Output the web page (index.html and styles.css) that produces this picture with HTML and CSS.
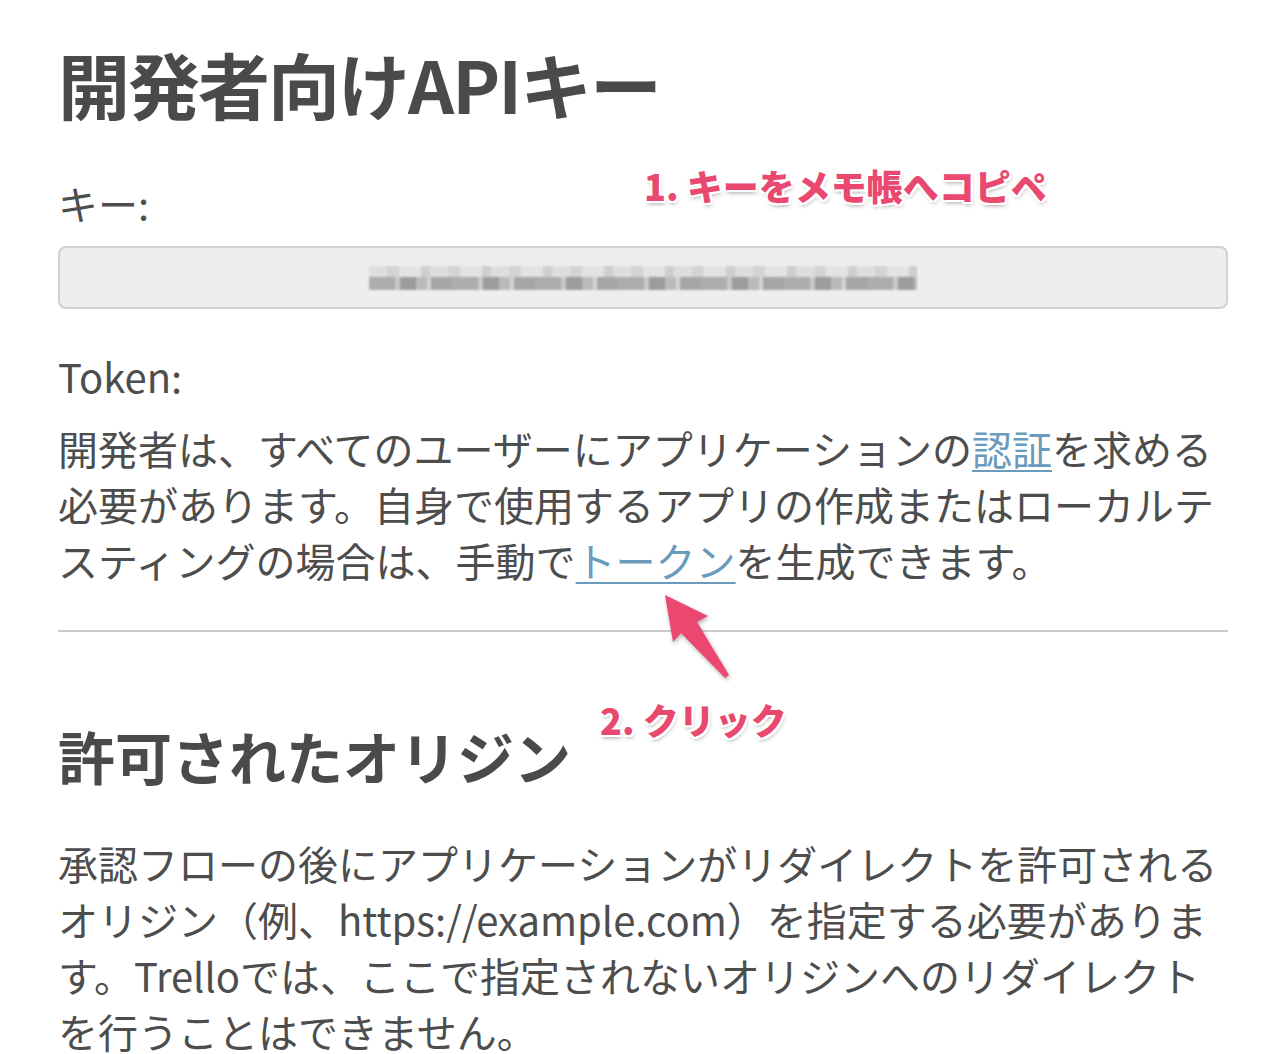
FILE: index.html
```html
<!DOCTYPE html>
<html lang="ja">
<head>
<meta charset="utf-8">
<title>開発者向けAPIキー</title>
<link rel="stylesheet" href="styles.css">
</head>
<body>
<main class="page">
  <h1 class="title">開発者向けAPIキー</h1>
  <div class="label">キー:</div>
  <div class="key-box"><div class="key-blur"><div class="blur-top"></div><div class="blur-bottom"></div></div></div>
  <div class="label label-token">Token:</div>
  <p class="text text-first">開発者は、すべてのユーザーにアプリケーションの<a class="link" href="#">認証</a>を求める必要があります。自身で使用するアプリの作成またはローカルテスティングの場合は、手動で<a class="link" href="#">トークン</a>を生成できます。</p>
  <hr class="rule">
  <h2 class="subtitle">許可されたオリジン</h2>
  <p class="text text-second">承認フローの後にアプリケーションがリダイレクトを許可されるオリジン（例、https://example.com）を指定する必要があります。Trelloでは、ここで指定されないオリジンへのリダイレクトを行うことはできません。</p>

  <div class="note note-one">1. キーをメモ帳へコピペ</div>
  <div class="note note-two">2. クリック</div>
  <svg class="arrow" width="90" height="100" viewBox="0 0 90 100">
    <polygon points="10,10 53,31 42,37 74,90 70,93 26,48 18,57" fill="#ea4870"/>
  </svg>
</main>
</body>
</html>
```

FILE: styles.css
```css
html, body {
  margin: 0;
  padding: 0;
  background: #ffffff;
}

body {
  font-family: "Noto Sans CJK JP", "Noto Sans", sans-serif;
  color: #4d4d4d;
  text-autospace: no-autospace;
}

.page {
  position: relative;
  width: 1170px;
  padding: 40px 0 0 58px;
}

.title {
  margin: 0;
  font-size: 72px;
  line-height: 86px;
  font-weight: 700;
  letter-spacing: -2px;
  color: #4a4a4a;
}

.label {
  margin-top: 49px;
  font-size: 40px;
  line-height: 56px;
}

.key-box {
  margin-top: 15px;
  height: 59px;
  border: 2px solid #d0d1d3;
  border-radius: 8px;
  background: #edeef0;
  display: flex;
  align-items: center;
  justify-content: center;
}

.key-blur {
  width: 548px;
  height: 24px;
  display: flex;
  flex-direction: column;
  filter: blur(1.2px);
  opacity: 0.85;
}

.blur-top {
  height: 11px;
  background: repeating-linear-gradient(90deg, #dcdcde 0 18px, #cfcfd1 18px 30px, #e2e2e4 30px 52px, #c9c9cb 52px 61px);
}

.blur-bottom {
  height: 13px;
  background: repeating-linear-gradient(90deg, #a2a2a4 0 26px, #c4c4c6 26px 31px, #8e8e90 31px 47px, #b2b2b4 47px 58px, #d0d0d2 58px 62px, #9a9a9c 62px 83px);
}

.label-token {
  margin-top: 39px;
}

.text {
  margin: 0;
  font-size: 40px;
  line-height: 56px;
}

.text-first {
  margin-top: 16px;
}

.link {
  color: #6a9bbd;
  text-decoration: underline;
  text-decoration-thickness: 2px;
  text-underline-offset: 5px;
}

.rule {
  margin: 42px 0 0 0;
  border: 0;
  height: 2px;
  background: #cccccc;
}

.subtitle {
  margin: 89px 0 0 0;
  font-size: 57px;
  line-height: 68px;
  font-weight: 700;
  color: #4a4a4a;
}

.text-second {
  margin-top: 46px;
}

.note {
  position: absolute;
  font-size: 36px;
  line-height: 44px;
  font-weight: 900;
  color: #e9486f;
  white-space: nowrap;
  text-shadow:
    2px 0 0 #fff, -2px 0 0 #fff, 0 2px 0 #fff, 0 -2px 0 #fff,
    2px 2px 0 #fff, -2px -2px 0 #fff, 2px -2px 0 #fff, -2px 2px 0 #fff,
    1px 3px 4px rgba(0, 0, 0, 0.35);
}

.note-one {
  left: 644px;
  top: 163px;
}

.note-two {
  left: 600px;
  top: 697px;
}

.arrow {
  position: absolute;
  left: 655px;
  top: 585px;
  filter: drop-shadow(1px 2px 2px rgba(0, 0, 0, 0.3));
}
```
